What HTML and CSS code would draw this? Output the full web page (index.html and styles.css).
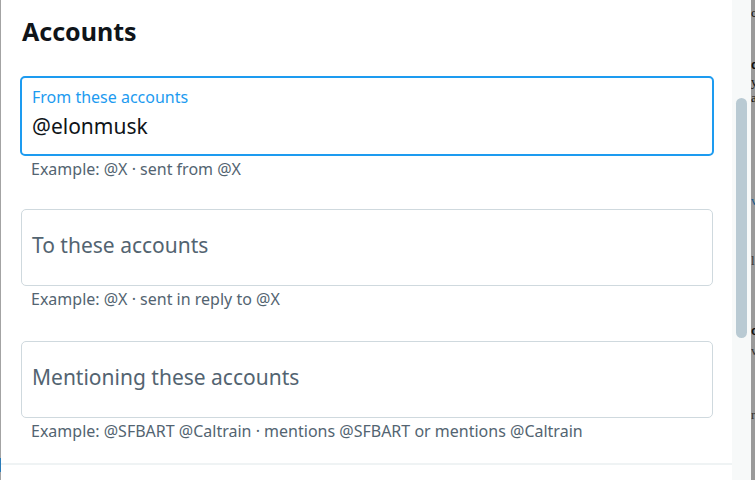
FILE: index.html
```html
<!DOCTYPE html>
<html>
<head>
<meta charset="utf-8">
<link rel="stylesheet" href="styles.css">
</head>
<body>
<div class="screen">
  <div class="modal">
    <div class="content">
      <h2 class="title">Accounts</h2>
      <div class="field field-active">
        <div class="label">From these accounts</div>
        <div class="value">@elonmusk</div>
      </div>
      <div class="hint hint-1">Example: @X · sent from @X</div>
      <div class="field">
        <div class="placeholder">To these accounts</div>
      </div>
      <div class="hint hint-2">Example: @X · sent in reply to @X</div>
      <div class="field">
        <div class="placeholder">Mentioning these accounts</div>
      </div>
      <div class="hint">Example: @SFBART @Caltrain · mentions @SFBART or mentions @Caltrain</div>
    </div>
    <div class="divider"></div>
    <div class="edge-mark"></div>
  </div>
  <div class="track"><div class="thumb"></div></div>
  <div class="backdrop">
    <div class="bd-line l1">c</div>
    <div class="bd-line l2 bold">d</div>
    <div class="bd-line l3">y</div>
    <div class="bd-line l4">a</div>
    <div class="bd-line l5 blue">v</div>
    <div class="bd-line l6 grey">l</div>
    <div class="bd-line l7 bold">c</div>
    <div class="bd-line l8 grey">v</div>
    <div class="bd-line l9 grey">r</div>
  </div>
</div>
</body>
</html>
```
FILE: styles.css
```css
html, body {
  margin: 0;
  padding: 0;
  background: #ffffff;
}
.screen {
  display: flex;
  width: 755px;
  height: 480px;
  overflow: hidden;
  font-family: "Noto Sans", "Open Sans", sans-serif;
}
.modal {
  position: relative;
  width: 731px;
  border-left: 1px solid #a3a3a3;
  background: #ffffff;
  display: flex;
  flex-direction: column;
}
.content {
  padding: 14px 19px 0 20px;
  flex: 1;
}
.title {
  margin: 0 0 28px 1px;
  font-size: 25px;
  font-weight: 700;
  line-height: 34px;
  color: #0f1419;
}
.field {
  border: 1px solid #cfd9de;
  border-radius: 5px;
  box-sizing: border-box;
  height: 77px;
  padding: 0 10px 5px 10px;
  display: flex;
  flex-direction: column;
  justify-content: center;
}
.field-active {
  border: 2px solid #1d9bf0;
  height: 80px;
  margin-left: -1px;
  margin-right: -1px;
  justify-content: flex-start;
  padding: 9px 10px 0 10px;
}
.label {
  font-size: 16px;
  line-height: 20px;
  color: #1d9bf0;
}
.value {
  margin-top: 6px;
  font-size: 21px;
  line-height: 26px;
  color: #0f1419;
}
.placeholder {
  font-size: 21px;
  line-height: 26px;
  color: #536471;
}
.hint {
  padding: 3px 0 0 10px;
  box-sizing: border-box;
  font-size: 16px;
  line-height: 20px;
  color: #536471;
}
.hint-1 { height: 53px; }
.hint-2 { height: 55px; }
.divider {
  height: 2px;
  background: #eff3f4;
  margin-bottom: 15px;
}
.edge-mark {
  position: absolute;
  left: -1px;
  bottom: 8px;
  width: 1px;
  height: 14px;
  background: #2a7bb8;
}
.track {
  width: 19px;
  background: #f7f9f9;
  padding: 98px 0 0 4px;
  box-sizing: border-box;
}
.thumb {
  width: 11px;
  height: 240px;
  border-radius: 6px;
  background: #b9cad3;
}
.backdrop {
  width: 4px;
  background: #9a9a9a;
  font-family: "Liberation Serif", serif;
  font-size: 13px;
  color: #111;
  overflow: hidden;
  position: relative;
}
.bd-line {
  position: absolute;
  left: 0;
  line-height: 12px;
}
.bold { font-weight: 700; font-family: "Liberation Sans", sans-serif; }
.blue { color: #1a5d8f; }
.grey { color: #333; }
.l1 { top: 7px; }
.l2 { top: 59px; }
.l3 { top: 76px; }
.l4 { top: 92px; }
.l5 { top: 195px; }
.l6 { top: 255px; }
.l7 { top: 325px; }
.l8 { top: 345px; }
.l9 { top: 409px; }
```
